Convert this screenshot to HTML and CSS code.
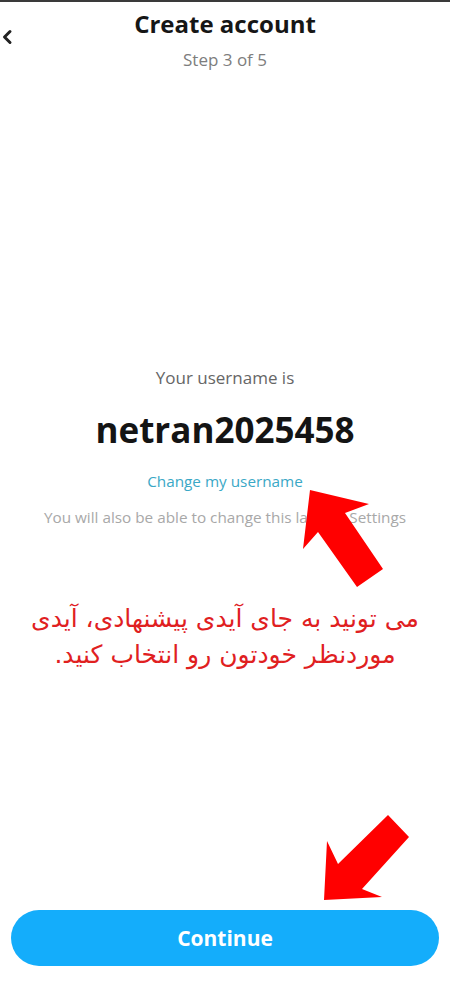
FILE: index.html
```html
<!DOCTYPE html>
<html lang="en">
<head>
    <meta charset="UTF-8">
    <meta name="viewport" content="width=device-width, initial-scale=1.0">
    <title>Create account</title>
    <link rel="stylesheet" href="styles.css">
</head>
<body>
    <div class="screen">
        <header class="topbar">
            <button class="back" aria-label="Back">
                <svg width="12" height="16" viewBox="0 0 12 16"><path d="M9 2.5 L3.5 8 L9 13.5" fill="none" stroke="#222" stroke-width="3" stroke-linecap="round" stroke-linejoin="round"/></svg>
            </button>
            <div class="titles">
                <h1>Create account</h1>
                <p class="step">Step 3 of 5</p>
            </div>
            <div></div>
        </header>

        <main class="content">
            <p class="label">Your username is</p>
            <p class="username">netran2025458</p>
            <a class="change" href="#">Change my username</a>
            <p class="hint">You will also be able to change this later in Settings</p>
            <p class="note" dir="rtl" lang="fa">می تونید به جای آیدی پیشنهادی، آیدی موردنظر خودتون رو انتخاب کنید.</p>
        </main>

        <footer class="bottom">
            <button class="continue">Continue</button>
        </footer>

        <!-- red annotation arrows drawn over the screenshot -->
        <svg class="arrows" width="450" height="1000" viewBox="0 0 450 1000">
            <polygon fill="#ff0000" points="310,488 369,502 345,511 383,567 357,585 318,530 303,547"/>
            <polygon fill="#ff0000" points="324,898 327,839 338,862 388,813 409,835 362,887 382,895"/>
        </svg>
    </div>
</body>
</html>
```

FILE: styles.css
```css
body {
    margin: 0;
    padding: 0;
    background-color: #fff;
    font-family: "Open Sans", Lato, sans-serif;
}
.screen {
    position: relative;
    height: 1000px;
    display: flex;
    flex-direction: column;
    border-top: 2px solid #3a3a3a;
    box-sizing: border-box;
}
.topbar {
    display: grid;
    grid-template-columns: 40px 1fr 40px;
    padding-top: 6px;
}
.back {
    align-self: center;
    justify-self: start;
    background: none;
    border: none;
    padding: 0 0 0 1px;
    margin-top: -4px;
    display: flex;
}
.titles {
    text-align: center;
}
h1 {
    margin: 0;
    font-size: 24px;
    line-height: 32px;
    font-weight: 700;
    color: #161616;
}
.step {
    margin: 10px 0 0;
    font-size: 17px;
    line-height: 20px;
    color: #7d7d7d;
}
.content {
    margin-top: 298px;
    display: flex;
    flex-direction: column;
    align-items: center;
    text-align: center;
}
.label {
    margin: 0;
    font-size: 17px;
    line-height: 20px;
    color: #666;
}
.username {
    margin: 22px 0 0;
    font-size: 35px;
    line-height: 40px;
    font-weight: 700;
    color: #141414;
}
.change {
    margin-top: 21px;
    font-size: 15.3px;
    line-height: 20px;
    color: #3aa8c6;
    text-decoration: none;
}
.hint {
    margin: 16px 0 0;
    font-size: 15.3px;
    line-height: 20px;
    color: #a8a8a8;
}
.note {
    margin: 74px 0 0;
    padding: 0 20px;
    font-family: "DejaVu Sans", sans-serif;
    font-size: 25px;
    line-height: 36px;
    color: #e0201f;
}
.bottom {
    margin-top: auto;
    padding: 0 11px 34px;
}
.continue {
    display: block;
    width: 100%;
    height: 56px;
    border: none;
    border-radius: 28px;
    background-color: #14adfb;
    color: #fff;
    font-family: "Open Sans", Lato, sans-serif;
    font-size: 21px;
    font-weight: 700;
}
.arrows {
    position: absolute;
    top: 0;
    left: 0;
    pointer-events: none;
}
```
